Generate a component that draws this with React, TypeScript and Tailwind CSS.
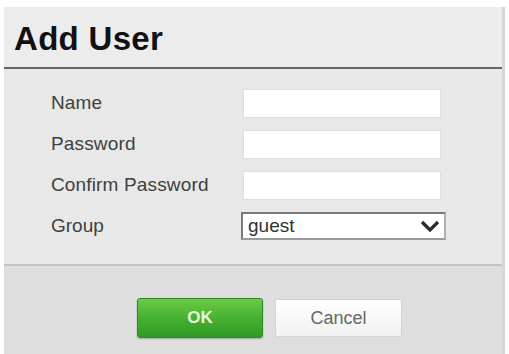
export default function App() {
  const fields = ["Name", "Password", "Confirm Password"];

  return (
    <div className="w-[509px] h-[354px] bg-white pt-[7px] pl-[4px] pr-[4px] overflow-hidden font-['Liberation_Sans',Arial,sans-serif]">
      <div className="h-full flex flex-col bg-[#e8e8e8] border-r-[3px] border-[#d6d6d6]">
        {/* header */}
        <div className="h-[62px] shrink-0 bg-[#ececec] border-b-2 border-[#666] flex items-end pl-[10px] pb-[12px]">
          <h1 className="text-[33px] leading-[33px] font-bold text-[#111] tracking-[0.3px]">
            Add User
          </h1>
        </div>

        {/* form */}
        <div className="pt-[20px] pb-[24px] flex flex-col gap-[12px] border-b-2 border-[#c4c4c4]">
          {fields.map((f) => (
            <div key={f} className="flex items-center h-[29px]">
              <span className="w-[239px] shrink-0 whitespace-nowrap pl-[47px] text-[19px] text-[#404040] tracking-[0.15px]">{f}</span>
              <div className="w-[198px] h-[29px] shrink-0 bg-white border border-[#dedede]" />
            </div>
          ))}
          <div className="flex items-center h-[28px]">
            <span className="w-[237px] shrink-0 pl-[47px] text-[19px] text-[#404040]">Group</span>
            <div className="w-[205px] h-[28px] shrink-0 bg-white border-2 border-[#7a7a7a] border-b-[#9a9a9a] border-r-[#b0b0b0] flex items-center justify-between pl-[5px] pr-[4px]">
              <span className="text-[19px] text-[#333]">guest</span>
              <svg width="20" height="12" viewBox="0 0 20 12">
                <path d="M2 2 L10 10 L18 2" fill="none" stroke="#2a2a2a" strokeWidth="3.2" />
              </svg>
            </div>
          </div>
        </div>

        {/* footer */}
        <div className="flex-1 bg-[#dedede] flex items-start pt-[32px] pl-[133px] gap-[12px]">
          <button className="w-[126px] h-[40px] rounded-[3px] border border-[#2f8a23] bg-gradient-to-b from-[#6ccb46] via-[#46b132] to-[#2f9a26] text-[17px] font-bold text-[#e6f8dc] shadow-[0_1px_2px_rgba(0,0,0,0.25)]">
            OK
          </button>
          <button className="w-[127px] h-[38px] mt-[1px] rounded-[2px] border border-[#d4d4d4] bg-gradient-to-b from-white to-[#f1f1f1] text-[18px] text-[#666]">
            Cancel
          </button>
        </div>
      </div>
    </div>
  );
}
